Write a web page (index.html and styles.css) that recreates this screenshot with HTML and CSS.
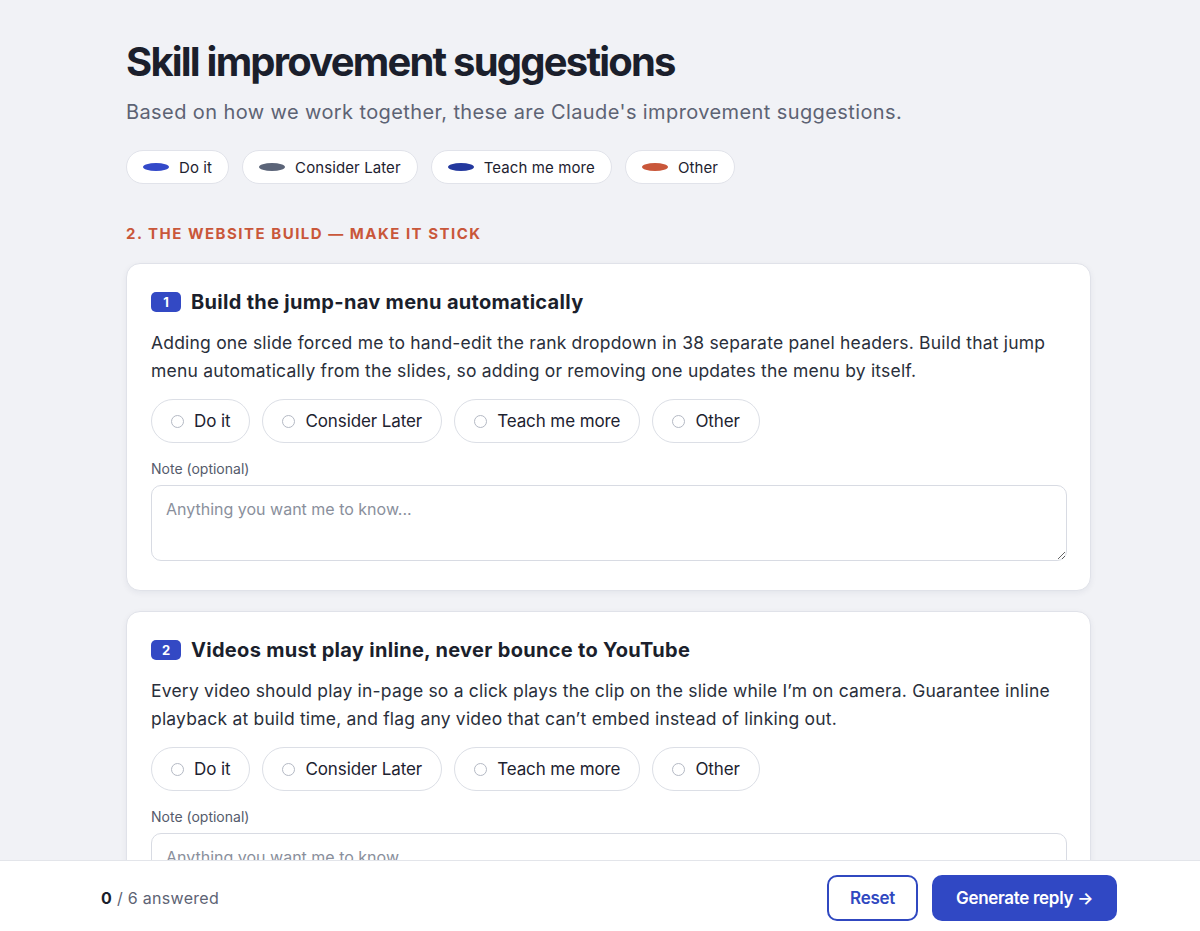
FILE: index.html
```html
<!DOCTYPE html>
<html lang="en">
<head>
    <meta charset="UTF-8">
    <meta name="viewport" content="width=device-width, initial-scale=1.0">
    <title>Skill improvement suggestions</title>
    <link rel="stylesheet" href="styles.css">
</head>
<body>
    <div class="page">
        <h1 class="title">Skill improvement suggestions</h1>
        <p class="subtitle">Based on how we work together, these are Claude's improvement suggestions.</p>

        <div class="legend">
            <span class="legend-chip"><span class="dot dot-do"></span>Do it</span>
            <span class="legend-chip"><span class="dot dot-later"></span>Consider Later</span>
            <span class="legend-chip"><span class="dot dot-teach"></span>Teach me more</span>
            <span class="legend-chip"><span class="dot dot-other"></span>Other</span>
        </div>

        <h2 class="section-title">2. The website build — make it stick</h2>

        <div class="card">
            <h3 class="card-title"><span class="num">1</span>Build the jump-nav menu automatically</h3>
            <p class="card-text">Adding one slide forced me to hand-edit the rank dropdown in 38 separate panel headers. Build that jump menu automatically from the slides, so adding or removing one updates the menu by itself.</p>
            <div class="choices">
                <label class="choice"><input type="radio" name="q1">Do it</label>
                <label class="choice"><input type="radio" name="q1">Consider Later</label>
                <label class="choice"><input type="radio" name="q1">Teach me more</label>
                <label class="choice"><input type="radio" name="q1">Other</label>
            </div>
            <div class="note-label">Note (optional)</div>
            <textarea class="note" placeholder="Anything you want me to know..."></textarea>
        </div>

        <div class="card">
            <h3 class="card-title"><span class="num">2</span>Videos must play inline, never bounce to YouTube</h3>
            <p class="card-text">Every video should play in-page so a click plays the clip on the slide while I’m on camera. Guarantee inline playback at build time, and flag any video that can’t embed instead of linking out.</p>
            <div class="choices">
                <label class="choice"><input type="radio" name="q2">Do it</label>
                <label class="choice"><input type="radio" name="q2">Consider Later</label>
                <label class="choice"><input type="radio" name="q2">Teach me more</label>
                <label class="choice"><input type="radio" name="q2">Other</label>
            </div>
            <div class="note-label">Note (optional)</div>
            <textarea class="note" placeholder="Anything you want me to know..."></textarea>
        </div>
    </div>

    <div class="footer">
        <div class="footer-inner">
            <div class="progress"><b>0</b> / 6 answered</div>
            <div class="actions">
                <button class="btn btn-outline">Reset</button>
                <button class="btn btn-primary">Generate reply →</button>
            </div>
        </div>
    </div>
</body>
</html>
```

FILE: styles.css
```css
body {
    margin: 0;
    background-color: #f1f2f6;
    font-family: Inter, "Noto Sans", sans-serif;
    color: #1d2230;
}
.page {
    width: 965px;
    margin-left: 126px;
    padding: 36px 0 120px;
}
.title {
    font-size: 40px;
    font-weight: 700;
    letter-spacing: -1.8px;
    margin: 0;
    line-height: 52px;
    color: #1b1f2c;
}
.subtitle {
    font-size: 20px;
    letter-spacing: 0.4px;
    color: #5d6374;
    margin: 10px 0 0;
    line-height: 28px;
}
.legend {
    display: flex;
    gap: 13px;
    margin-top: 24px;
}
.legend-chip {
    display: flex;
    align-items: center;
    gap: 10px;
    height: 32px;
    padding: 0 16px;
    background: #fff;
    border: 1px solid #e1e3ea;
    border-radius: 18px;
    font-size: 15px;
    letter-spacing: 0.1px;
    color: #1d2230;
}
.dot {
    width: 26px;
    height: 8px;
    border-radius: 50%;
}
.dot-do { background: #3349c9; }
.dot-later { background: #5b6478; }
.dot-teach { background: #23389e; }
.dot-other { background: #c9573a; }
.section-title {
    margin: 40px 0 20px;
    font-size: 15px;
    font-weight: 700;
    letter-spacing: 1.5px;
    text-transform: uppercase;
    color: #c9573a;
}
.card {
    background: #fff;
    border: 1px solid #e0e2e9;
    border-radius: 14px;
    box-shadow: 0 2px 6px rgba(20, 30, 60, 0.06);
    padding: 24px 23px 29px 24px;
    margin-bottom: 20px;
}
.card-title {
    display: flex;
    align-items: center;
    gap: 10px;
    margin: 0;
    font-size: 20px;
    font-weight: 700;
    letter-spacing: 0.3px;
    line-height: 28px;
    color: #1b1f2c;
}
.num {
    display: inline-flex;
    align-items: center;
    justify-content: center;
    width: 30px;
    height: 20px;
    border-radius: 5px;
    background: #3349c4;
    color: #fff;
    font-size: 13px;
    letter-spacing: 0;
}
.card-text {
    font-size: 17.5px;
    letter-spacing: 0.2px;
    line-height: 28px;
    color: #2a2f3b;
    margin: 13px 0 14px;
}
.choices {
    display: flex;
    gap: 12px;
}
.choice {
    display: flex;
    align-items: center;
    gap: 10px;
    box-sizing: border-box;
    height: 44px;
    padding: 0 19px;
    border: 1px solid #dcdfe6;
    border-radius: 22px;
    font-size: 17px;
    letter-spacing: -0.1px;
    color: #1d2230;
    cursor: pointer;
}
.choice input {
    appearance: none;
    width: 13px;
    height: 13px;
    margin: 0;
    border: 1.5px solid #b4b9c4;
    border-radius: 50%;
}
.note-label {
    font-size: 14px;
    color: #555b6b;
    margin: 17px 0 8px;
}
.note {
    display: block;
    box-sizing: border-box;
    width: 100%;
    height: 76px;
    padding: 13px 14px;
    border: 1px solid #d8dbe3;
    border-radius: 10px;
    font-family: Inter, "Noto Sans", sans-serif;
    font-size: 16px;
    color: #1d2230;
}
.note::placeholder {
    color: #8a8f9c;
}
.footer {
    position: fixed;
    left: 0;
    right: 0;
    bottom: 0;
    height: 70px;
    background: #fff;
    border-top: 1px solid #e3e5ea;
}
.footer-inner {
    display: flex;
    align-items: center;
    justify-content: space-between;
    box-sizing: border-box;
    width: 1016px;
    margin-left: 101px;
    height: 100%;
    padding-top: 3px;
}
.progress {
    font-size: 16px;
    letter-spacing: 0.3px;
    color: #5d6374;
}
.progress b {
    color: #1b1f2c;
}
.actions {
    display: flex;
    gap: 14px;
}
.btn {
    height: 46px;
    border-radius: 10px;
    font-family: Inter, "Noto Sans", sans-serif;
    font-size: 17px;
    font-weight: 600;
    letter-spacing: -0.3px;
    cursor: pointer;
}
.btn-outline {
    width: 91px;
    background: #fff;
    border: 2px solid #3048c0;
    color: #3048c0;
}
.btn-primary {
    width: 185px;
    background: #3048c4;
    border: none;
    color: #fff;
}
```
